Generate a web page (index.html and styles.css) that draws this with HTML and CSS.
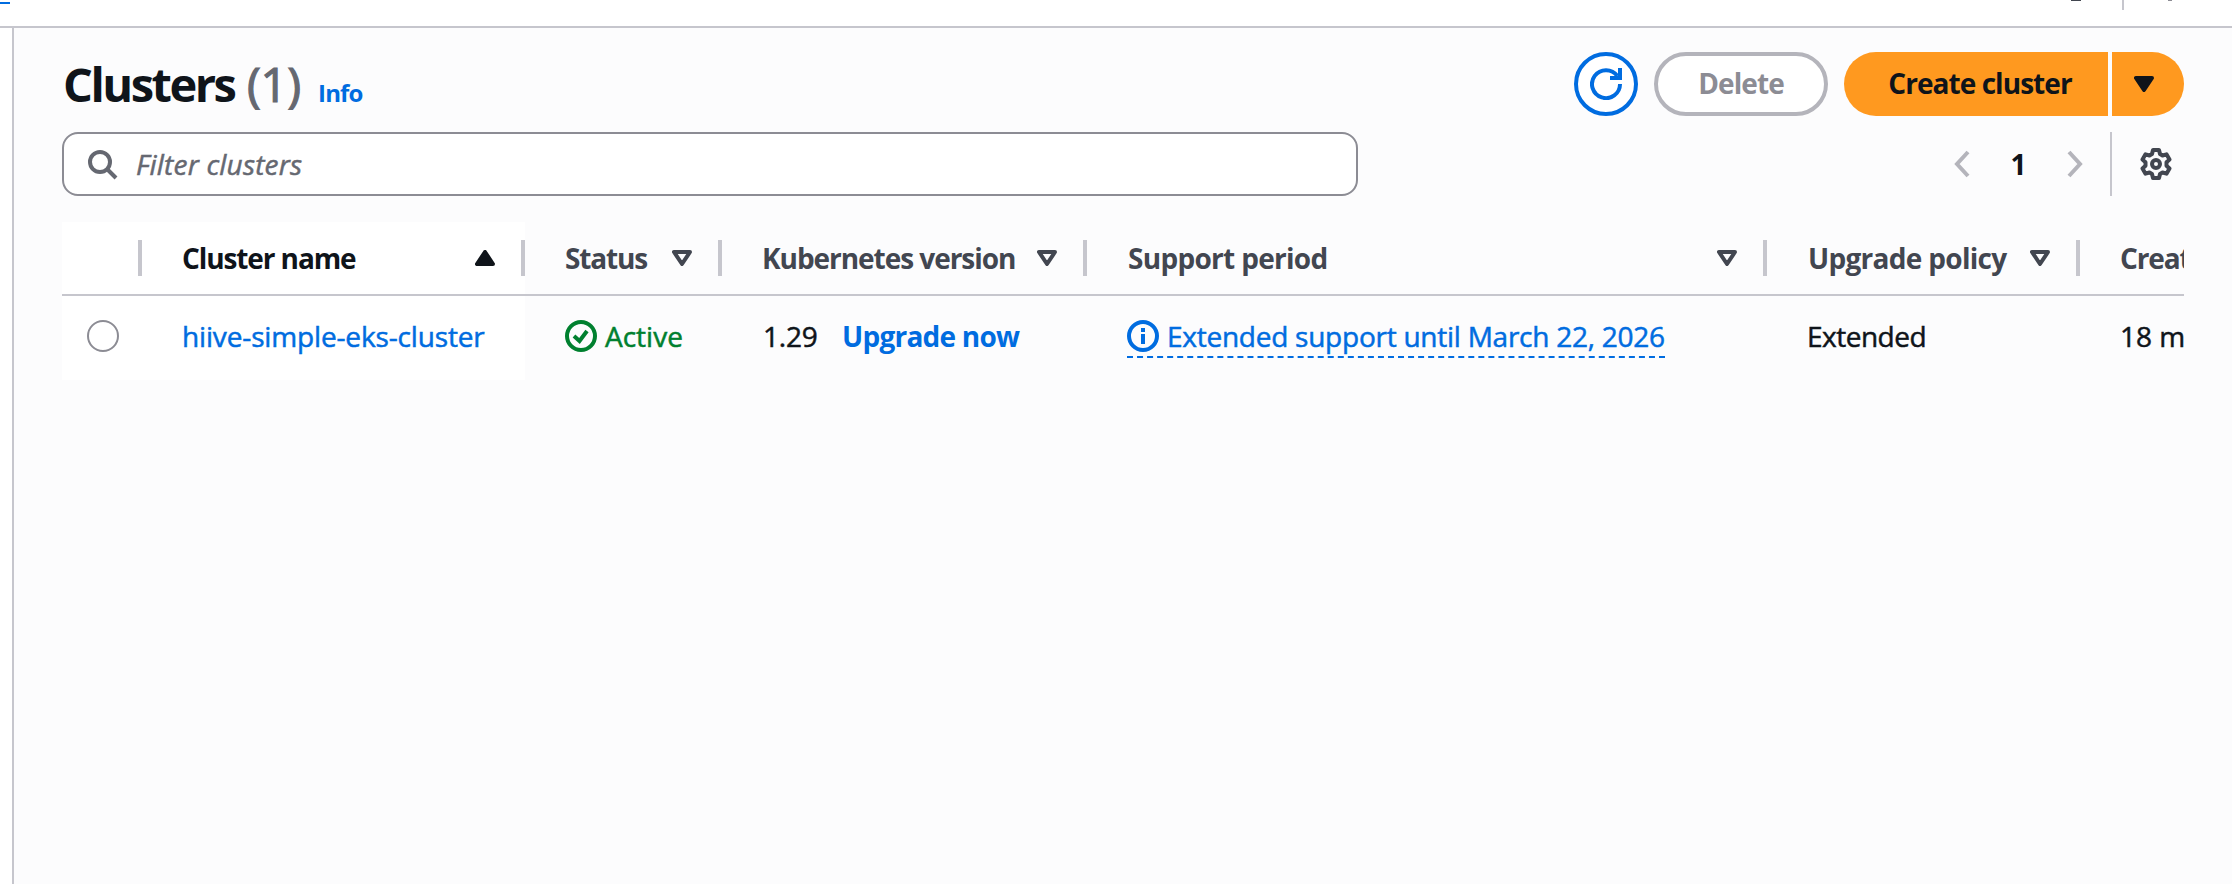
FILE: index.html
```html
<!DOCTYPE html>
<html lang="en">
<head>
<meta charset="utf-8">
<title>Clusters</title>
<link rel="stylesheet" href="styles.css">
</head>
<body>
<div class="topbar">
  <span class="topbar-link"></span>
  <div class="topbar-tools"><span class="tool-bell"></span><span class="tool-sep"></span><span class="tool-help"></span></div>
</div>
<div class="shell">
  <nav class="side"></nav>
  <main class="content">
    <header class="header">
      <h1 class="title"><span class="title-name">Clusters</span> <span class="count">(1)</span><a class="info">Info</a></h1>
      <div class="actions">
        <button class="btn btn-refresh" aria-label="Refresh"><svg class="icon" viewBox="0 0 32 32"><path d="M20 10H30V0"/><path d="M30 16a14 14 0 1 1-2.6-8"/></svg></button>
        <button class="btn btn-delete">Delete</button>
        <div class="split">
          <button class="btn btn-create">Create cluster</button>
          <button class="btn btn-more" aria-label="More"><svg class="caret caret-solid" viewBox="0 0 20 16"><path d="M2 2h16l-8 12z"/></svg></button>
        </div>
      </div>
    </header>
    <div class="toolbar">
      <label class="search"><svg class="icon" viewBox="0 0 32 32"><circle cx="14" cy="14" r="10"/><path d="M21 21l9 9"/></svg><span class="placeholder">Filter clusters</span></label>
      <div class="pager">
        <svg class="chevron" viewBox="0 0 16 28"><path d="M14 2L3 14l11 12"/></svg>
        <span class="page">1</span>
        <svg class="chevron" viewBox="0 0 16 28"><path d="M2 2l11 12L2 26"/></svg>
        <span class="pager-sep"></span>
        <svg class="icon gear" viewBox="0 0 32 32"><path d="M13 2h6l1 4 2.5 1.5 4-1.2 3 5.2-3 2.8v3.4l3 2.8-3 5.2-4-1.2L20 26l-1 4h-6l-1-4-2.5-1.5-4 1.2-3-5.2 3-2.8v-3.4l-3-2.8 3-5.2 4 1.2L12 6z"/><circle cx="16" cy="16" r="4"/></svg>
      </div>
    </div>
    <div class="table-wrap">
      <div class="table">
        <div class="row head">
          <div class="cell pinned"></div>
          <div class="cell pinned sorted"><span class="w-name">Cluster name</span><svg class="caret caret-solid" viewBox="0 0 20 16"><path d="M2 14h16L10 2z"/></svg></div>
          <div class="cell"><span class="w-status">Status</span><svg class="caret" viewBox="0 0 20 16"><path d="M2 2h16l-8 12z"/></svg></div>
          <div class="cell"><span class="w-version">Kubernetes version</span><svg class="caret" viewBox="0 0 20 16"><path d="M2 2h16l-8 12z"/></svg></div>
          <div class="cell"><span class="w-support">Support period</span><svg class="caret" viewBox="0 0 20 16"><path d="M2 2h16l-8 12z"/></svg></div>
          <div class="cell"><span class="w-policy">Upgrade policy</span><svg class="caret" viewBox="0 0 20 16"><path d="M2 2h16l-8 12z"/></svg></div>
          <div class="cell last"><span class="w-created">Created</span></div>
        </div>
        <div class="row body">
          <div class="cell pinned select"><span class="radio"></span></div>
          <div class="cell pinned"><a class="link">hiive-simple-eks-cluster</a></div>
          <div class="cell status"><svg class="icon" viewBox="0 0 32 32"><circle cx="16" cy="16" r="14"/><path d="M9 16l5.5 5L22 11"/></svg><span class="active">Active</span></div>
          <div class="cell"><span class="version">1.29</span><a class="upgrade">Upgrade now</a></div>
          <div class="cell"><a class="support"><svg class="icon" viewBox="0 0 32 32"><circle cx="16" cy="16" r="14"/><path d="M16 8v4M16 14v10"/></svg><span>Extended support until March 22, 2026</span></a></div>
          <div class="cell"><span class="policy">Extended</span></div>
          <div class="cell last"><span>18 minutes ago</span></div>
        </div>
      </div>
    </div>
  </main>
</div>
</body>
</html>
```
FILE: styles.css
```css
* { box-sizing: border-box; }

body {
  margin: 0;
  height: 884px;
  overflow: hidden;
  display: flex;
  flex-direction: column;
  background: #fff;
  color: #0f141a;
  font: 400 28px/40px "Open Sans", "Noto Sans", sans-serif;
}

svg { display: block; fill: none; stroke: currentColor; stroke-width: 4; flex: none; }
.icon { width: 32px; height: 32px; }

/* Top bar */
.topbar {
  height: 28px;
  flex: none;
  display: flex;
  justify-content: space-between;
  border-bottom: 2px solid #c6c6cd;
}
.topbar-link { width: 10px; height: 2px; margin-top: 2px; background: #006ce0; }
.topbar-tools { display: flex; align-items: flex-start; padding-right: 60px; }
.tool-bell { width: 10px; height: 1px; background: #424650; margin-right: 41px; }
.tool-sep { width: 2px; height: 10px; background: #c6c6cd; margin-right: 44px; }
.tool-help { width: 4px; height: 1px; background: #8c8c94; }

/* Page shell */
.shell { flex: 1; display: flex; min-height: 0; }
.side { width: 14px; flex: none; border-right: 2px solid #c6c6cd; }
.content {
  flex: 1;
  min-width: 0;
  padding: 24px 48px 0;
  background: #fcfcfd;
}

/* Header */
.header { display: flex; justify-content: space-between; height: 64px; }
.title { margin: 0; padding-left: 1px; display: flex; align-items: baseline; font-size: 47px; line-height: 65px; }
.title-name { width: 184px; font-weight: 700; letter-spacing: -2.5px; }
.count { width: 71px; color: #656871; font-weight: 400; letter-spacing: -0.3px; -webkit-text-stroke: 1.2px currentColor; }
.info { color: #006ce0; font-size: 24px; font-weight: 700; letter-spacing: -0.8px; }
.actions { display: flex; gap: 16px; }
.btn {
  height: 64px;
  padding: 0 0 2px;
  border: 4px solid #b4b4bb;
  border-radius: 32px;
  background: #fff;
  font: 700 28px/36px "Open Sans", "Noto Sans", sans-serif;
  display: flex;
  align-items: center;
  justify-content: center;
}
.btn-refresh { width: 64px; padding: 0; border-color: #006ce0; color: #006ce0; }
.btn-delete { width: 174px; color: #8c8c94; letter-spacing: -0.9px; }
.split { display: flex; gap: 4px; }
.btn-create, .btn-more { border: 0; background: #ff991f; color: #0f141a; }
.btn-create { width: 264px; padding-left: 8px; border-radius: 32px 0 0 32px; letter-spacing: -0.95px; }
.btn-more { width: 72px; padding: 0 8px 0 0; border-radius: 0 32px 32px 0; }
.caret { width: 20px; height: 16px; stroke-linejoin: round; }
.caret-solid { fill: currentColor; }

/* Filter and pagination */
.toolbar { display: flex; justify-content: space-between; margin-top: 16px; height: 64px; }
.search {
  width: 1296px;
  display: flex;
  align-items: center;
  padding-left: 22px;
  border: 2px solid #8c8c94;
  border-radius: 16px;
  background: #fff;
  color: #656871;
}
.placeholder { margin-left: 18px; padding-bottom: 1px; font-style: italic; letter-spacing: 0.2px; -webkit-text-stroke: 0.5px currentColor; }
.pager { display: flex; align-items: center; padding-right: 12px; }
.chevron { width: 16px; height: 28px; color: #b4b4bb; }
.page { width: 97px; padding-bottom: 1px; text-align: center; font-weight: 700; }
.pager-sep { width: 2px; height: 64px; margin: 0 28px 0 27px; background: #c6c6cd; }
.gear { color: #424650; stroke-linejoin: round; }

/* Table */
.table-wrap { margin-top: 26px; overflow: hidden; }
.table { width: 2320px; }
.row {
  display: grid;
  grid-template-columns: 80px 383px 197px 365px 680px 313px 302px;
}
.cell { position: relative; display: flex; align-items: center; padding-left: 40px; white-space: nowrap; }
.pinned { background: #fff; }
.head { height: 74px; border-bottom: 2px solid #c6c6cd; color: #424650; font-weight: 700; }
.head .cell { justify-content: space-between; padding-right: 30px; }
.head .cell span { padding-bottom: 1px; }
.head .cell::after {
  content: "";
  position: absolute;
  right: 0;
  top: 18px;
  width: 4px;
  height: 36px;
  background: #c6c6cd;
}
.head .sorted { color: #0f141a; }
.w-name, .w-created { letter-spacing: -1.1px; }
.w-status { letter-spacing: -1.15px; }
.w-version { letter-spacing: -1.05px; }
.w-support, .w-policy { padding-left: 1px; letter-spacing: -0.7px; }
.body { height: 84px; -webkit-text-stroke: 0.5px currentColor; }
.body .cell { padding-bottom: 4px; }
.body .select { padding: 0 0 4px 25px; }
.radio { width: 32px; height: 32px; border: 2px solid #8c8c94; border-radius: 50%; background: #fff; }
.link { color: #006ce0; letter-spacing: -0.15px; }
.status { color: #00802f; gap: 8px; }
.version { width: 80px; padding-left: 1px; letter-spacing: -0.2px; }
.upgrade { color: #006ce0; font-weight: 700; letter-spacing: -0.75px; -webkit-text-stroke: 0; }
.support {
  display: flex;
  align-items: center;
  gap: 8px;
  height: 42px;
  margin-top: 2px;
  color: #006ce0;
  letter-spacing: -0.25px;
  border-bottom: 2px dashed #006ce0;
}
.support span { padding-bottom: 1px; }
.policy { letter-spacing: -0.5px; }
```
